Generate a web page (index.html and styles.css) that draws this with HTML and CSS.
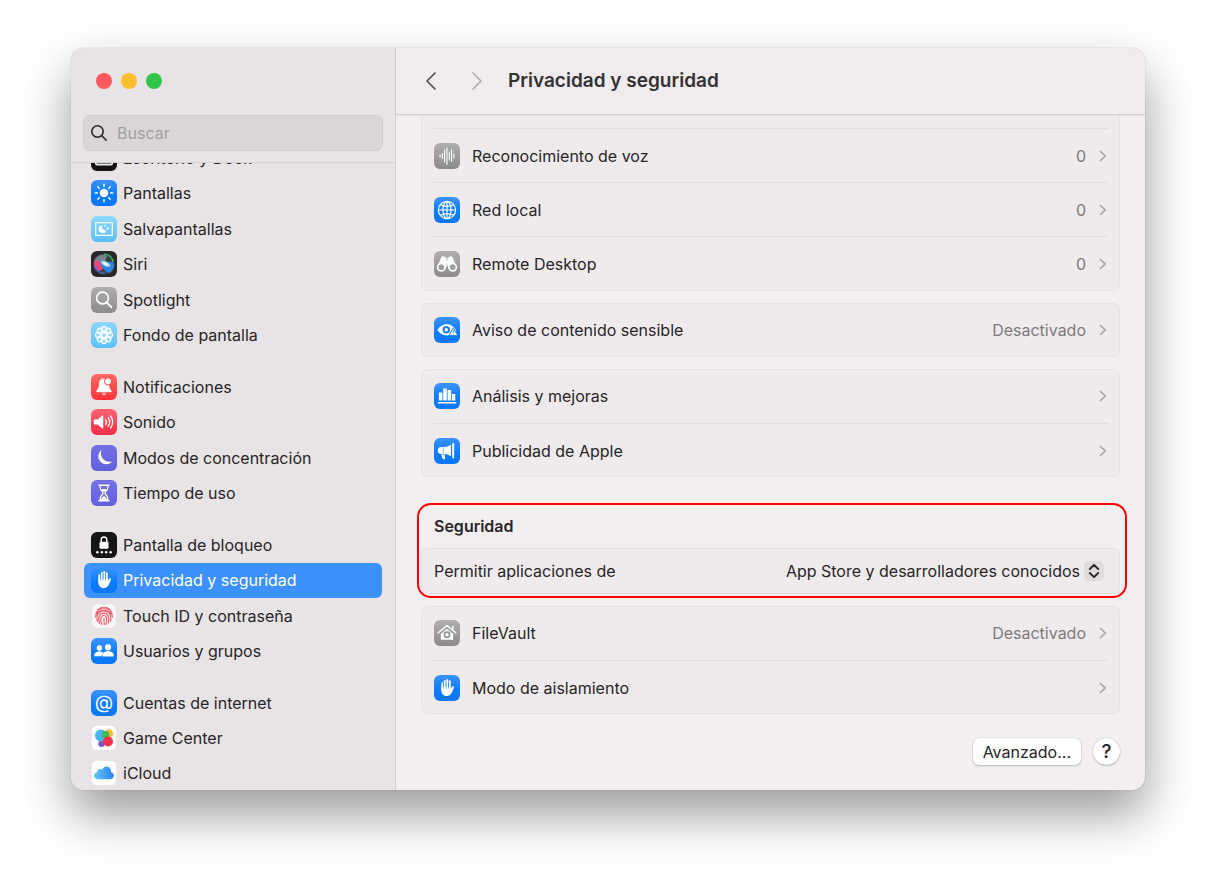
FILE: index.html
```html
<!DOCTYPE html>
<html lang="es">
<head>
<meta charset="utf-8">
<title>Privacidad y seguridad</title>
<meta name="viewport" content="width=device-width, initial-scale=1">
<link rel="stylesheet" href="styles.css">
</head>
<body>
<svg class="defs" width="0" height="0" aria-hidden="true">
  <defs>
    <linearGradient id="blue" x2="0" y2="1"><stop offset="0" stop-color="#3b93ff"/><stop offset=".6" stop-color="#0a7bff"/><stop offset="1" stop-color="#0877fa"/></linearGradient>
    <linearGradient id="gray" x2="0" y2="1"><stop stop-color="#b0aeaf"/><stop offset="1" stop-color="#8c8a8b"/></linearGradient>
    <linearGradient id="sky" x2="0" y2="1"><stop stop-color="#8bd9fb"/><stop offset="1" stop-color="#5dbff8"/></linearGradient>
    <linearGradient id="red" x2="0" y2="1"><stop stop-color="#ff6a67"/><stop offset="1" stop-color="#ff3336"/></linearGradient>
    <linearGradient id="pink" x2="0" y2="1"><stop stop-color="#ff6472"/><stop offset="1" stop-color="#fd2c4b"/></linearGradient>
    <linearGradient id="indigo" x2="0" y2="1"><stop stop-color="#7371e6"/><stop offset="1" stop-color="#6260dc"/></linearGradient>
    <linearGradient id="cloud" x2="1" y2="0"><stop stop-color="#66c8fa"/><stop offset="1" stop-color="#2f82f5"/></linearGradient>
    <radialGradient id="siri"><stop stop-color="#fff"/><stop offset=".5" stop-color="#c5ecf8"/><stop offset="1" stop-color="#4fa3dc"/></radialGradient>
    <symbol id="hand" viewBox="0 0 26 26">
      <g fill="none" stroke="#fff" stroke-width="1.9" stroke-linecap="round"><path d="M8.300 8.200V15M10.800 6V14M13.300 5V14M15.800 6.200V14M18.900 12.200L17 16"/></g>
      <path fill="#fff" d="M7.400 12h9.400v3.200l2-3.200.9.900c-1 2.800-1.700 4.600-2.900 6.100-1.100 1.400-2.300 2-4.200 2-3.300 0-5.200-2.300-5.200-6z"/>
      <path d="M9.600 8v5.500M12.050 6.500v7M14.550 6.500v7" stroke="#1b83ff" stroke-width=".5"/>
    </symbol>
    <symbol id="chevron" viewBox="0 0 8 14"><path d="M1.500 2.500L6.300 7l-4.800 4.500" fill="none" stroke="currentColor" stroke-width="1.700" stroke-linecap="round" stroke-linejoin="round"/></symbol>
  </defs>
</svg>

<div class="window">
  <aside class="sidebar">
    <div class="sidebar-top">
      <div class="lights">
        <button class="light light-close" aria-label="Cerrar"></button>
        <button class="light light-min" aria-label="Minimizar"></button>
        <button class="light light-zoom" aria-label="Ampliar"></button>
      </div>
      <label class="search">
        <svg viewBox="0 0 18 18" aria-hidden="true"><circle cx="7.500" cy="7.500" r="5.700"/><path d="M11.800 11.800L16.300 16.300"/></svg>
        <input type="search" placeholder="Buscar" aria-label="Buscar">
      </label>
    </div>
    <nav class="nav">
      <div class="nav-list">
        <div class="group group-six">
          <a href="#escritorio"><svg class="icon" viewBox="0 0 26 26"><rect width="26" height="26" rx="6" fill="#151415"/><rect x="4" y="6" width="18" height="14.500" rx="2" fill="#eee"/><rect x="6" y="16" width="14" height="3" fill="#777"/></svg>Escritorio y Dock</a>
          <a href="#pantallas"><svg class="icon" viewBox="0 0 26 26"><rect width="26" height="26" rx="6" fill="url(#blue)"/><circle cx="13" cy="13" r="4.300" fill="#fff"/><path d="M13 4.300v2M13 19.700v2M4.300 13h2M19.700 13h2M6.900 6.900l1.300 1.300M17.800 17.800l1.300 1.300M6.900 19.100l1.300-1.300M17.800 8.200l1.300-1.300" stroke="#fff" stroke-width="1.500" stroke-linecap="round"/></svg>Pantallas</a>
          <a href="#salvapantallas"><svg class="icon" viewBox="0 0 26 26"><rect width="26" height="26" rx="6" fill="url(#sky)"/><rect x="4.700" y="6.700" width="16.600" height="12.600" fill="none" stroke="#fff" stroke-width="1.200"/><path d="M11 9.200a4 4 0 1 0 4.300 5.200A4 4 0 0 1 11 9.200z" fill="#fff"/><path d="M16.800 11v3M15.300 12.500h3M14 9v1.600M13.200 9.800h1.600" stroke="#fff" stroke-width=".9"/></svg>Salvapantallas</a>
          <a href="#siri"><svg class="icon" viewBox="0 0 26 26"><rect width="26" height="26" rx="6" fill="#29272a"/><circle cx="13" cy="13" r="10.500" fill="#3b4148"/><path d="M3 10c2-5 8-8 13-5l-3 8-10 4z" fill="#76858b"/><path d="M2.800 10.500C7 9 12 11 14 14c-2 5-6 7-8 5-2-2-3.500-5-3.200-8.500z" fill="#e0487f"/><path d="M10 14c4-4 9-4 13-2 1 4-1 8-5 10-3-1-6-4-8-8z" fill="#2b84e4"/><ellipse cx="14.500" cy="12.800" rx="5.800" ry="2.600" fill="url(#siri)" transform="rotate(28 14.500 12.800)"/><path d="M13 3c5 0 9 4 9 8" fill="none" stroke="#36ad69" stroke-width="1.500"/><path d="M3 15c2 5 7 8 11 7" fill="none" stroke="#416bdf" stroke-width="1.200"/></svg>Siri</a>
          <a href="#spotlight"><svg class="icon" viewBox="0 0 26 26"><rect width="26" height="26" rx="6" fill="url(#gray)"/><circle cx="11.500" cy="11" r="5.900" fill="none" stroke="#fff" stroke-width="1.600"/><path d="M15.800 15.600l4.600 4.600" stroke="#fff" stroke-width="1.900" stroke-linecap="round"/></svg>Spotlight</a>
          <a href="#fondo"><svg class="icon" viewBox="0 0 26 26"><rect width="26" height="26" rx="6" fill="url(#sky)"/><g fill="#fff" fill-opacity=".3" stroke="#fff" stroke-width="1.200"><circle cx="13" cy="6.900" r="2.500"/><circle cx="17.300" cy="8.700" r="2.500"/><circle cx="19.100" cy="13" r="2.500"/><circle cx="17.300" cy="17.300" r="2.500"/><circle cx="13" cy="19.100" r="2.500"/><circle cx="8.700" cy="17.300" r="2.500"/><circle cx="6.900" cy="13" r="2.500"/><circle cx="8.700" cy="8.700" r="2.500"/><circle cx="13" cy="13" r="2.500"/></g></svg>Fondo de pantalla</a>
        </div>
        <div class="group">
          <a href="#notificaciones"><svg class="icon" viewBox="0 0 26 26"><rect width="26" height="26" rx="6" fill="url(#red)"/><path d="M13 4.500c-3.500 0-5 2.600-5 5.600 0 3.400-.8 4.700-2.300 6.200-.8.800-.5 1.900.6 1.900h13.400c1.100 0 1.400-1.100.6-1.900-1.500-1.500-2.300-2.800-2.300-6.200 0-3-1.500-5.600-5-5.600zM11 19.400h4c-.4 2.200-3.600 2.200-4 0z" fill="#fff"/><circle cx="17" cy="7.300" r="3.900" fill="#ff5a58"/><circle cx="17" cy="7.300" r="2.900" fill="#fff"/></svg>Notificaciones</a>
          <a href="#sonido"><svg class="icon" viewBox="0 0 26 26"><rect width="26" height="26" rx="6" fill="url(#pink)"/><path d="M3.600 10.500h3.200l4.400-4.100c.5-.4 1-.1 1 .5v12.200c0 .6-.5.900-1 .5l-4.400-4.100H3.600c-.5 0-.8-.3-.8-.8v-3.400c0-.5.300-.8.800-.8z" fill="#fff"/><path d="M14.600 10.500c1 1.500 1 3.500 0 5M17 8.700c2 2.500 2 6.100 0 8.600M19.500 7c2.800 3.600 2.800 8.400 0 12" fill="none" stroke="#fff" stroke-width="1.300" stroke-linecap="round"/></svg>Sonido</a>
          <a href="#concentracion"><svg class="icon" viewBox="0 0 26 26"><rect width="26" height="26" rx="6" fill="url(#indigo)"/><path d="M10.400 5.800a8.300 8.300 0 0 0 9.700 10.800.4.400 0 0 1 .4.600A7.900 7.900 0 1 1 9.900 5.400c.4-.2.700.1.500.4z" fill="#fff"/></svg>Modos de concentración</a>
          <a href="#tiempo"><svg class="icon" viewBox="0 0 26 26"><rect width="26" height="26" rx="6" fill="url(#indigo)"/><path d="M8 5.300h10M8 20.700h10" stroke="#fff" stroke-width="1.600" stroke-linecap="round"/><path d="M9.200 6v2c0 2.500 2.900 3.400 2.900 5s-2.900 2.500-2.900 5v2M16.800 6v2c0 2.500-2.900 3.400-2.900 5s2.900 2.500 2.900 5v2" fill="none" stroke="#fff" stroke-width="1.300"/><path d="M10.300 9h5.400L13 12.300zM10 20c0-2.200 1.800-2.600 3-4.400 1.200 1.800 3 2.200 3 4.400z" fill="#fff"/></svg>Tiempo de uso</a>
        </div>
        <div class="group">
          <a href="#bloqueo"><svg class="icon" viewBox="0 0 26 26"><rect width="26" height="26" rx="6" fill="#161516"/><rect x="8.500" y="9.700" width="9" height="7" rx="1.300" fill="#fff"/><path d="M10.200 10V7.800c0-3.900 5.600-3.900 5.600 0V10" fill="none" stroke="#fff" stroke-width="1.500"/><g fill="#fff"><circle cx="6.300" cy="20.300" r="1.250"/><circle cx="10.800" cy="20.300" r="1.250"/><circle cx="15.200" cy="20.300" r="1.250"/><circle cx="19.700" cy="20.300" r="1.250"/></g></svg>Pantalla de bloqueo</a>
          <a href="#privacidad" class="selected" aria-current="page"><svg class="icon" viewBox="0 0 26 26"><rect width="26" height="26" rx="6" fill="url(#blue)"/><use href="#hand"/></svg>Privacidad y seguridad</a>
          <a href="#touchid"><svg class="icon" viewBox="0 0 26 26"><rect x=".5" y=".5" width="25" height="25" rx="5.500" fill="#f8f5f6" stroke="#dcd9da" stroke-width=".6"/><g fill="none" stroke="#f0616e" stroke-width="1.200" stroke-linecap="round"><path d="M7 6.500c3.500-3 8.500-3 12 0M4.800 11c1.500-7 14.900-7 16.400 0M4.500 14c.5-9 16.500-9 17 0M6.500 18.500c-2-8 2-10.500 6.500-10.500s8 3 6.500 10.500M8.500 20.300C6.500 14 8.500 10.200 13 10.200s5.500 4.500 4.500 9.800M10.700 21.300c-2-5.300-.7-8.800 2.300-8.800s3.200 4 2 9M13 15c0 2.500 0 4.500.3 6.500"/></g></svg>Touch ID y contraseña</a>
          <a href="#usuarios"><svg class="icon" viewBox="0 0 26 26"><rect width="26" height="26" rx="6" fill="url(#blue)"/><g fill="#fff"><circle cx="8.400" cy="10" r="2.700"/><path d="M3 18.300c0-3 2.300-4.700 5.400-4.700 1.700 0 2.900.5 3.800 1.300-1 .9-1.600 2-1.700 3.400z"/><circle cx="17" cy="9.300" r="3.100"/><path d="M11.300 17.400c0-2.700 2.500-4.200 5.700-4.200s5.800 1.500 5.800 4.200c0 .7-.4 1.200-1 1.200h-9.500c-.6 0-1-.5-1-1.200z"/></g></svg>Usuarios y grupos</a>
        </div>
        <div class="group group-three">
          <a href="#cuentas"><svg class="icon" viewBox="0 0 26 26"><rect width="26" height="26" rx="6" fill="url(#blue)"/><text class="at" x="13" y="19" text-anchor="middle">@</text></svg>Cuentas de internet</a>
          <a href="#gamecenter"><svg class="icon" viewBox="0 0 26 26"><rect x=".5" y=".5" width="25" height="25" rx="5.500" fill="#fff" stroke="#dcd9da" stroke-width=".4"/><circle cx="17.800" cy="8.500" r="4.300" fill="#fdb92c"/><circle cx="10.500" cy="18.700" r="3.200" fill="#795acb"/><circle cx="10" cy="10.500" r="6" fill="#45b5f3"/><circle cx="14.500" cy="10" r="3.900" fill="#42b95d"/><circle cx="17" cy="16.500" r="5" fill="#fc3152"/></svg>Game Center</a>
          <a href="#icloud"><svg class="icon" viewBox="0 0 26 26"><rect x=".5" y=".5" width="25" height="25" rx="5.500" fill="#fff" stroke="#dcd9da" stroke-width=".4"/><path d="M7.300 19.200c-5.300 0-5.400-6.500-1.200-7 .2-3 3.200-3.900 5-2.600 2.400-5.300 9.500-3.200 8.900 2.400 4.500 1.200 3.500 7.200-.9 7.200z" fill="url(#cloud)"/></svg>iCloud</a>
        </div>
      </div>
    </nav>
  </aside>

  <main class="main">
    <header class="toolbar">
      <button class="nav-btn" aria-label="Atrás"><svg viewBox="0 0 14 22"><path d="M11 3L3 11l8 8"/></svg></button>
      <button class="nav-btn" aria-label="Adelante" disabled><svg viewBox="0 0 14 22"><path d="M3 3l8 8-8 8"/></svg></button>
      <h1>Privacidad y seguridad</h1>
    </header>
    <div class="content">
      <section class="card card-continued">
        <a class="row" href="#voz"><svg class="icon" viewBox="0 0 26 26"><rect width="26" height="26" rx="6" fill="url(#gray)"/><path d="M6 12v2M8.300 10.500v5M10.600 7v12M13 5v16.500M15.300 9v8M17.600 6.500v12M19.900 11v4" stroke="#fff" stroke-width="1.100" stroke-linecap="round"/></svg><span class="name">Reconocimiento de voz</span><span class="value">0</span><svg class="chev"><use href="#chevron"/></svg></a>
        <a class="row" href="#red-local"><svg class="icon" viewBox="0 0 26 26"><rect width="26" height="26" rx="6" fill="url(#blue)"/><g fill="none" stroke="#fff" stroke-width="1.200"><circle cx="13" cy="13" r="8.600"/><ellipse cx="13" cy="13" rx="4" ry="8.600"/><path d="M13 4.400v17.200M4.400 13h17.200M6.500 7.800c3.500 2.200 9.500 2.200 13 0M6.500 18.200c3.500-2.200 9.500-2.200 13 0"/></g></svg><span class="name">Red local</span><span class="value">0</span><svg class="chev"><use href="#chevron"/></svg></a>
        <a class="row" href="#remote"><svg class="icon" viewBox="0 0 26 26"><rect width="26" height="26" rx="6" fill="url(#gray)"/><path d="M7.300 6.300c1-1.500 3.700-1.200 4.200.5h3c.5-1.700 3.200-2 4.200-.5l3.800 9.500-7.500 2.700-1-3h-2l-1 3-7.500-2.700z" fill="#fff"/><g fill="#a09e9f" stroke="#fff" stroke-width="1.600"><circle cx="7.300" cy="16.200" r="3.700"/><circle cx="18.700" cy="16.200" r="3.700"/></g><path d="M13 7v3M13 12.500v3" stroke="#a9a7a8" stroke-width=".8"/></svg><span class="name">Remote Desktop</span><span class="value">0</span><svg class="chev"><use href="#chevron"/></svg></a>
      </section>
      <section class="card">
        <a class="row" href="#aviso"><svg class="icon" viewBox="0 0 26 26"><rect width="26" height="26" rx="6" fill="url(#blue)"/><path d="M3.300 13C7.800 5.400 17.600 5.400 22 13c-4.400 7.200-14.200 7.200-18.700 0z" fill="#fff"/><circle cx="12.300" cy="12.700" r="3.800" fill="#1681ff"/><circle cx="12.300" cy="12.700" r="1.700" fill="#fff"/><path d="M19.300 10.800l4.600 7.800h-9.200z" fill="#fff" stroke="#1681ff" stroke-width="1"/><path d="M19.300 13.300v2.500M19.300 16.600v.8" stroke="#1681ff" stroke-width="1"/></svg><span class="name">Aviso de contenido sensible</span><span class="value">Desactivado</span><svg class="chev"><use href="#chevron"/></svg></a>
      </section>
      <section class="card">
        <a class="row" href="#analisis"><svg class="icon" viewBox="0 0 26 26"><rect width="26" height="26" rx="6" fill="url(#blue)"/><path d="M4.800 9.500h3.600v8H4.800zM9.200 5.500h3.600v12H9.200zM13.600 7h3.600v10.500h-3.600zM18 11h3.300v6.500H18zM3.800 19h18.500v1.500H3.800z" fill="#fff"/></svg><span class="name">Análisis y mejoras</span><svg class="chev"><use href="#chevron"/></svg></a>
        <a class="row" href="#publicidad"><svg class="icon" viewBox="0 0 26 26"><rect width="26" height="26" rx="6" fill="url(#blue)"/><path d="M17 6.700v11.600c-2.500-1.500-5-2.300-7.500-2.300H7c-4.300 0-4.300-7 0-7h2.500c2.500 0 5-.8 7.500-2.300zM7 16.600h3.500l.8 3.400c.2 1.200-2.300 1.700-2.800.4z" fill="#fff"/><path d="M19.200 6v13.500" stroke="#fff" stroke-width="2" stroke-linecap="round"/><path d="M9.400 9v7" stroke="#5aa7ff" stroke-width=".6"/></svg><span class="name">Publicidad de Apple</span><svg class="chev"><use href="#chevron"/></svg></a>
      </section>
      <section class="highlight">
        <h2>Seguridad</h2>
        <div class="card">
          <div class="row row-select">
            <label class="name" for="allow">Permitir aplicaciones de</label>
            <div class="select">
              <select id="allow"><option>App Store y desarrolladores conocidos</option></select>
              <svg class="stepper" viewBox="0 0 20 20" aria-hidden="true"><rect width="20" height="20" rx="5"/><path d="M5.800 8L10 3.800 14.200 8M5.800 12l4.200 4.200 4.200-4.200"/></svg>
            </div>
          </div>
        </div>
      </section>
      <section class="card card-after">
        <a class="row" href="#filevault"><svg class="icon" viewBox="0 0 26 26"><rect width="26" height="26" rx="6" fill="url(#gray)"/><path d="M4.300 12.800L13 5.500l8.700 7.300M18.800 6.500v4" fill="none" stroke="#fff" stroke-width="1.500" stroke-linecap="round" stroke-linejoin="round"/><path d="M13 8.900l6.200 5.200v5.700H6.800v-5.700z" fill="#fff"/><circle cx="13" cy="14.800" r="2.600" fill="#fff" stroke="#959394" stroke-width="1.700"/></svg><span class="name">FileVault</span><span class="value">Desactivado</span><svg class="chev"><use href="#chevron"/></svg></a>
        <a class="row" href="#aislamiento"><svg class="icon" viewBox="0 0 26 26"><rect width="26" height="26" rx="6" fill="url(#blue)"/><use href="#hand"/></svg><span class="name">Modo de aislamiento</span><svg class="chev"><use href="#chevron"/></svg></a>
      </section>
      <footer class="actions">
        <button class="btn">Avanzado...</button>
        <button class="btn btn-help" aria-label="Ayuda">?</button>
      </footer>
    </div>
  </main>
</div>
</body>
</html>
```

FILE: styles.css
```css
* { box-sizing: border-box; }

body {
  margin: 0;
  padding: 48px 71px 94px;
  background: #fff;
  color: #272527;
  font: 16px/20px Inter, "Liberation Sans", sans-serif;
}

a { color: inherit; text-decoration: none; }
button, input, select { font: inherit; color: inherit; }
.defs { position: absolute; }

.window {
  display: grid;
  grid-template-columns: 325px minmax(0, 1fr);
  grid-template-rows: minmax(0, 1fr);
  height: calc(100vh - 142px);
  border-radius: 13px;
  overflow: hidden;
  background: #f3eff0;
  box-shadow: 0 24px 50px rgba(0, 0, 0, .4), 0 0 1px rgba(0, 0, 0, .4);
}

/* Sidebar */
.sidebar {
  display: flex;
  flex-direction: column;
  min-height: 0;
  background: #e8e4e5;
  border-right: 1px solid #d6d2d3;
}
.sidebar-top {
  padding: 25px 12px 11px;
  border-bottom: 1px solid #d6d2d3;
}
.lights { display: flex; gap: 9px; padding-left: 13px; margin-bottom: 26px; }
.light { width: 16px; height: 16px; padding: 0; border: 0; border-radius: 50%; }
.light-close { background: #ff5b5f; }
.light-min { background: #fbbf2e; }
.light-zoom { background: #31c748; }

.search {
  display: flex;
  align-items: center;
  gap: 9px;
  height: 36px;
  padding: 0 6px;
  border: 1px solid #d1cdce;
  border-radius: 7px;
  background: #dad6d7;
}
.search svg { width: 18px; height: 18px; flex: none; fill: none; stroke: #272527; stroke-width: 1.6; stroke-linecap: round; }
.search input { flex: 1; min-width: 0; padding: 0; border: 0; outline: 0; background: none; }
.search input::placeholder { color: #a29fa0; opacity: 1; }

.nav { flex: 1; min-height: 0; overflow: hidden; }
.nav-list { display: grid; gap: 16px; margin-top: -23px; padding: 0 13px; }
.group { display: grid; grid-auto-rows: 1fr; min-height: 142px; }
.group-six { min-height: 213px; }
.group-three { min-height: 106px; }
.group a { display: flex; align-items: center; gap: 6px; padding: 0 7px; border-radius: 6px; }
.group .selected { background: #3d91ff; color: #fff; }
.icon { width: 26px; height: 26px; flex: none; }
.at { fill: #fff; font-size: 19px; }

/* Main pane */
.main { display: flex; flex-direction: column; min-width: 0; min-height: 0; }
.toolbar {
  display: flex;
  align-items: center;
  flex: none;
  height: 67px;
  padding: 0 28px;
  border-bottom: 1px solid #d3cfd0;
  box-shadow: 0 1px 2px rgba(0, 0, 0, .06);
  background: #f0ecee;
}
.nav-btn { display: flex; margin-right: 32px; padding: 0; border: 0; background: none; }
.nav-btn svg { width: 14px; height: 22px; fill: none; stroke: #4b494b; stroke-width: 1.6; stroke-linecap: round; stroke-linejoin: round; }
.nav-btn:disabled { margin-right: 24px; }
.nav-btn:disabled svg { stroke: #aeabac; }
h1 { margin: 0; font-size: 19px; line-height: 24px; font-weight: 600; color: #343234; }

.content { flex: 1; min-height: 0; overflow: hidden; padding: 0 25px 24px; }
.card {
  margin-bottom: 12px;
  padding: 0 12px;
  border-radius: 7px;
  background: #efebec;
  box-shadow: inset 0 0 0 1px #e6e2e3;
}
.card-continued { padding-top: 13px; padding-bottom: 1px; border-radius: 0 0 7px 7px; }
.row { display: flex; align-items: center; gap: 12px; height: 54px; padding: 0 1px; }
.row + .row, .card-continued .row { border-top: 1px solid #e2dedf; }
.name { flex: 1; }
.value { padding-right: 1px; color: #7d7a7c; }
.chev { width: 8px; height: 14px; color: #a8a5a6; flex: none; }

.highlight {
  margin: 26px -7px 8px -4px;
  padding: 0 5px 2px 2px;
  border: 2px solid #fe0000;
  border-radius: 14px;
}
.highlight h2 { margin: 0; padding: 11px 13px 12px; font-size: 16px; line-height: 20px; font-weight: 600; }
.highlight .card { margin: 0; }
.row-select { height: 46px; padding-right: 4px; }
.select { display: grid; align-items: center; }
.select > * { grid-area: 1 / 1; }
.select select { appearance: none; padding: 0 24px 0 0; border: 0; outline: 0; background: none; text-align: right; }
.stepper { width: 20px; height: 20px; justify-self: end; pointer-events: none; }
.stepper rect { fill: #e0dcdd; }
.stepper path { fill: none; stroke: #272527; stroke-width: 1.8; stroke-linecap: round; stroke-linejoin: round; }

.card-after { margin-bottom: 24px; }
.actions { display: flex; justify-content: flex-end; gap: 12px; }
.btn {
  height: 27px;
  padding: 0 10px;
  border: 0;
  border-radius: 6px;
  background: #fff;
  box-shadow: 0 0 1px rgba(0, 0, 0, .3), 0 1px 2px rgba(0, 0, 0, .2);
}
.btn-help { width: 27px; padding: 0; border-radius: 50%; font-size: 19px; font-weight: 500; }
```
